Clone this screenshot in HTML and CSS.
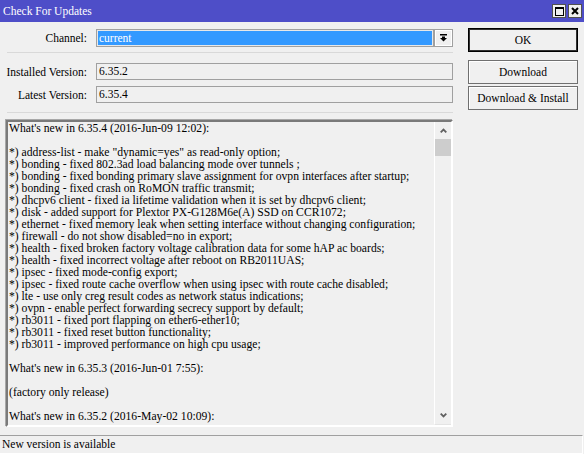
FILE: index.html
```html
<!DOCTYPE html>
<html>
<head>
<meta charset="utf-8">
<title>Check For Updates</title>
<link rel="stylesheet" href="styles.css">
</head>
<body>
<div class="window">
  <div class="titlebar">
    <span class="title">Check For Updates</span>
    <div class="tbtns">
      <span class="tbtn"><svg width="9" height="9" viewBox="0 0 9 9"><rect x="0.5" y="0.5" width="8" height="8" fill="none" stroke="#000" stroke-width="1"/><rect x="0" y="0" width="9" height="2" fill="#000"/></svg></span>
      <span class="tbtn"><svg width="8" height="8" viewBox="0 0 8 8"><path d="M1 1 L7 7 M7 1 L1 7" stroke="#000" stroke-width="2"/></svg></span>
    </div>
  </div>
  <div class="main">
    <div class="left">
      <div class="row row-channel">
        <span class="lbl">Channel:</span>
        <div class="select">current</div>
        <span class="dd"><svg width="7" height="8" viewBox="0 0 7 8"><rect x="0" y="0" width="7" height="1.5" fill="#000"/><rect x="2" y="2.5" width="3" height="2" fill="#000"/><polygon points="0,4 7,4 3.5,7.5" fill="#000"/></svg></span>
      </div>
      <div class="sep sep1"></div>
      <div class="row row-inst">
        <span class="lbl">Installed Version:</span>
        <div class="field">6.35.2</div>
      </div>
      <div class="row row-latest">
        <span class="lbl">Latest Version:</span>
        <div class="field">6.35.4</div>
      </div>
      <div class="sep sep2"></div>
      <div class="textbox">
        <div class="content"><div class="ln">What's new in 6.35.4 (2016-Jun-09 12:02):</div><div class="ln"> </div><div class="ln">*) address-list - make "dynamic=yes" as read-only option;</div><div class="ln">*) bonding - fixed 802.3ad load balancing mode over tunnels ;</div><div class="ln">*) bonding - fixed bonding primary slave assignment for ovpn interfaces after startup;</div><div class="ln">*) bonding - fixed crash on RoMON traffic transmit;</div><div class="ln">*) dhcpv6 client - fixed ia lifetime validation when it is set by dhcpv6 client;</div><div class="ln">*) disk - added support for Plextor PX-G128M6e(A) SSD on CCR1072;</div><div class="ln">*) ethernet - fixed memory leak when setting interface without changing configuration;</div><div class="ln">*) firewall - do not show disabled=no in export;</div><div class="ln">*) health - fixed broken factory voltage calibration data for some hAP ac boards;</div><div class="ln">*) health - fixed incorrect voltage after reboot on RB2011UAS;</div><div class="ln">*) ipsec - fixed mode-config export;</div><div class="ln">*) ipsec - fixed route cache overflow when using ipsec with route cache disabled;</div><div class="ln">*) lte - use only creg result codes as network status indications;</div><div class="ln">*) ovpn - enable perfect forwarding secrecy support by default;</div><div class="ln">*) rb3011 - fixed port flapping on ether6-ether10;</div><div class="ln">*) rb3011 - fixed reset button functionality;</div><div class="ln">*) rb3011 - improved performance on high cpu usage;</div><div class="ln"> </div><div class="ln">What's new in 6.35.3 (2016-Jun-01 7:55):</div><div class="ln"> </div><div class="ln">(factory only release)</div><div class="ln"> </div><div class="ln">What's new in 6.35.2 (2016-May-02 10:09):</div></div>
        <div class="scrollbar">
          <div class="sb-arrow"><svg width="7" height="5" viewBox="0 0 7 5"><polyline points="0.7,4.3 3.5,1.5 6.3,4.3" fill="none" stroke="#606060" stroke-width="1.8"/></svg></div>
          <div class="sb-thumb"></div>
          <div class="sb-track"></div>
          <div class="sb-arrow"><svg width="7" height="5" viewBox="0 0 7 5"><polyline points="0.7,0.7 3.5,3.5 6.3,0.7" fill="none" stroke="#606060" stroke-width="1.8"/></svg></div>
        </div>
      </div>
    </div>
    <div class="right">
      <div class="btn btn-default">OK</div>
      <div class="btn btn-dl">Download</div>
      <div class="btn btn-dli">Download &amp; Install</div>
    </div>
  </div>
  <div class="status">New version is available</div>
</div>
</body>
</html>
```
FILE: styles.css
```css
* { box-sizing: border-box; }
html, body { margin: 0; padding: 0; }
body {
  width: 584px;
  height: 454px;
  overflow: hidden;
  background: #f0f0f0;
  font-family: "Liberation Serif", "Times New Roman", serif;
  font-size: 11.5px;
  color: #000;
}
.window {
  width: 584px;
  height: 454px;
  display: flex;
  flex-direction: column;
}
.titlebar {
  height: 22px;
  flex: none;
  background: #4e4ec8;
  color: #fff;
  display: flex;
  align-items: center;
  padding-left: 3px;
  padding-right: 2px;
}
.title { flex: 1; }
.tbtns { display: flex; gap: 2px; }
.tbtn {
  width: 14px;
  height: 14px;
  background: #f0f0f0;
  border: 1px solid #505050;
  display: flex;
  align-items: center;
  justify-content: center;
}
.main {
  flex: 1;
  display: flex;
}
.left {
  width: 453px;
  padding-left: 6px;
  padding-top: 7px;
  display: flex;
  flex-direction: column;
}
.row {
  display: flex;
  align-items: center;
  height: 17px;
}
.row-channel { height: 18px; }
.lbl {
  width: 81px;
  margin-right: 9px;
  text-align: right;
  white-space: nowrap;
}
.select {
  width: 338px;
  height: 18px;
  border: 1px solid #a0a0a0;
  box-shadow: inset 0 0 0 1px #e8e8e8;
  background: #3399ff;
  color: #fff;
  padding-left: 2px;
  line-height: 16px;
}
.dd {
  width: 19px;
  height: 18px;
  border: 1px solid #a0a0a0;
  box-shadow: inset 0 0 0 1px #fff;
  background: #f0f0f0;
  display: flex;
  align-items: center;
  justify-content: center;
}
.field {
  width: 357px;
  height: 17px;
  border: 1px solid #a0a0a0;
  padding-left: 2px;
  line-height: 15px;
  background: #f0f0f0;
}
.sep {
  height: 1px;
  margin-left: 1px;
  background: #d9d9d9;
}
.sep1 { margin-top: 5px; }
.row-inst { margin-top: 10px; }
.row-latest { margin-top: 6px; }
.sep2 { margin-top: 9px; }
.textbox {
  margin-top: 7px;
  height: 307px;
  display: flex;
  border-style: solid;
  border-width: 2px;
  border-color: #7a7a7a #ffffff #ffffff #7a7a7a;
  box-shadow: -1px -1px 0 0 #a8a8a8;
}
.content {
  flex: 1;
  overflow: hidden;
  padding-left: 1px;
  font-size: 11.65px;
  line-height: 12px;
  white-space: pre;
}
.ln { height: 12px; padding-top: 1px; }
.scrollbar {
  width: 17px;
  display: flex;
  flex-direction: column;
  border-left: 1px solid #ffffff;
  border-bottom: 1px solid #e4e4e4;
}
.sb-arrow {
  height: 17px;
  display: flex;
  align-items: center;
  justify-content: center;
}
.sb-thumb {
  height: 17px;
  background: #cdcdcd;
}
.sb-track { flex: 1; }
.right {
  margin-left: 15px;
  padding-top: 6px;
  width: 110px;
  display: flex;
  flex-direction: column;
}
.btn {
  height: 24px;
  border: 1px solid #707070;
  box-shadow: inset 1px 1px 0 #fff;
  background: #f0f0f0;
  display: flex;
  align-items: center;
  justify-content: center;
  white-space: nowrap;
}
.btn-default {
  border: 1px solid #000;
  box-shadow: inset 0 0 0 1px #303030;
}
.btn-dl { margin-top: 8px; }
.btn-dli { margin-top: 2px; }
.status {
  height: 19px;
  flex: none;
  border-top: 1px solid #a0a0a0;
  border-right: 1px solid #fff;
  border-bottom: 1px solid #fff;
  width: 583px;
  padding-left: 2px;
  line-height: 17px;
}
```
